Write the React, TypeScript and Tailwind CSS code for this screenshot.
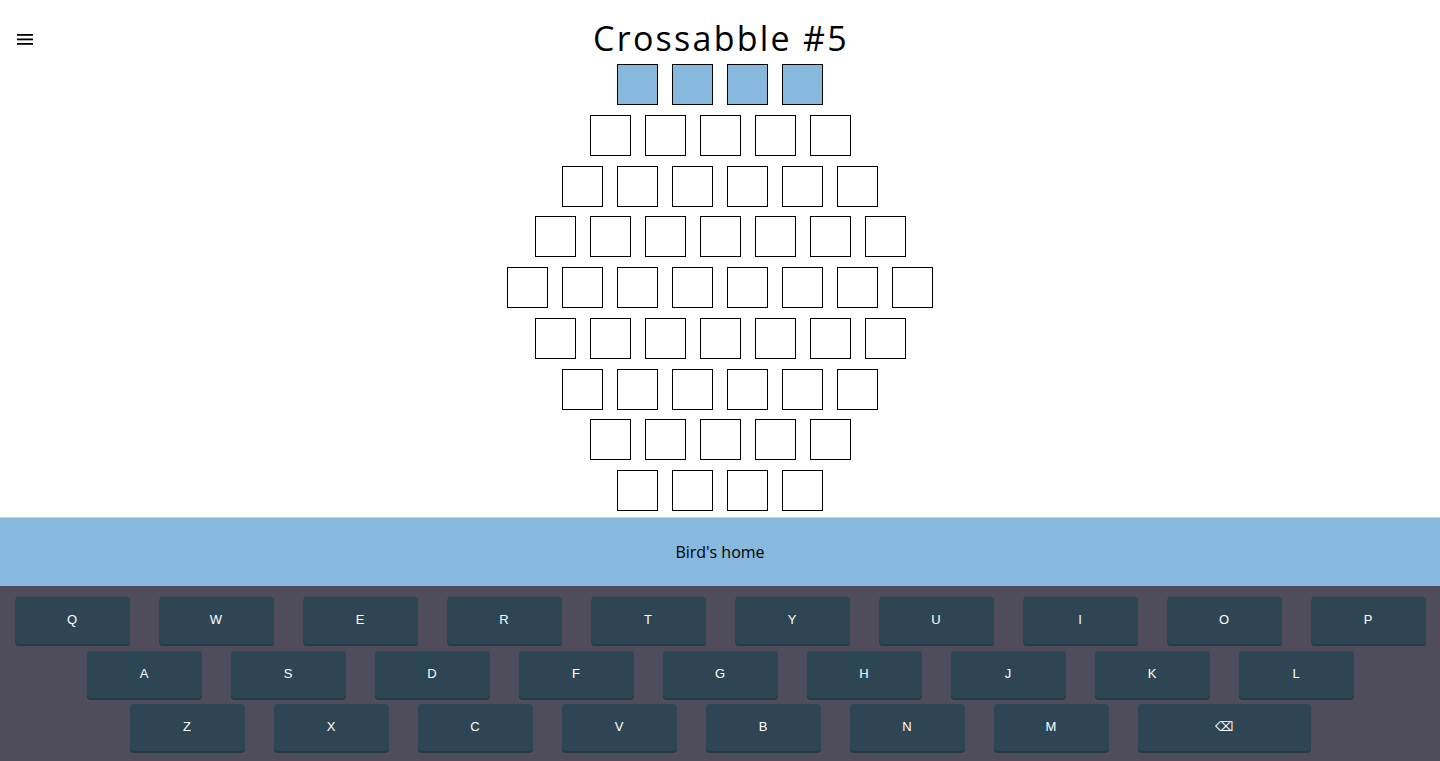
import React from 'react';

const rows = [4, 5, 6, 7, 8, 7, 6, 5, 4];
const keyRows = [
  ['Q', 'W', 'E', 'R', 'T', 'Y', 'U', 'I', 'O', 'P'],
  ['A', 'S', 'D', 'F', 'G', 'H', 'J', 'K', 'L'],
  ['Z', 'X', 'C', 'V', 'B', 'N', 'M', '⌫'],
];

function MenuIcon() {
  return (
    <svg width="16" height="12" viewBox="0 0 16 12" fill="#000">
      <rect x="0" y="0" width="16" height="1.8" />
      <rect x="0" y="4.5" width="16" height="1.8" />
      <rect x="0" y="9" width="16" height="1.8" />
    </svg>
  );
}

export default function App() {
  return (
    <div className="w-[1440px] h-[761px] bg-white flex flex-col overflow-hidden" style={{ fontFamily: '"Open Sans", "Noto Sans", sans-serif' }}>
      {/* header */}
      <div className="relative h-[64px] flex justify-center">
        <button className="absolute left-[17px] top-[34px]">
          <MenuIcon />
        </button>
        <h1 className="text-[34px] leading-none tracking-[2.25px] text-black mt-[21px] pl-[2px]">Crossabble #5</h1>
      </div>

      {/* board */}
      <div className="flex flex-col items-center gap-y-[9.75px]">
        {rows.map((n, r) => (
          <div key={r} className="flex gap-x-[14px]">
            {Array.from({ length: n }).map((_, i) => (
              <div
                key={i}
                className={
                  r === 0
                    ? 'w-[41px] h-[41px] border border-black bg-[#86b9dd]'
                    : 'w-[41px] h-[41px] border border-black bg-white'
                }
              />
            ))}
          </div>
        ))}
      </div>

      {/* clue */}
      <div className="mt-[6px] h-[69px] bg-[#86b9dd] border-t border-[#c8d6df] flex items-center justify-center text-[16px] text-black">
        Bird's home
      </div>

      {/* keyboard */}
      <div className="flex-1 bg-[#4f4d5c] pt-[11px] flex flex-col items-center gap-y-[6.5px]" style={{ fontFamily: '"Liberation Sans", Arial, sans-serif' }}>
        {keyRows.map((row, r) => (
          <div key={r} className="flex gap-x-[29px]">
            {row.map((k) => (
              <button
                key={k}
                className={
                  (k === '⌫' ? 'w-[173px] ' : 'w-[115px] ') +
                  'h-[47px] rounded-[4px] bg-[#2e4654] shadow-[0_2px_0_#253a47] text-white text-[13px] flex items-center justify-center pb-[1px]'
                }
              >
                {k}
              </button>
            ))}
          </div>
        ))}
      </div>
    </div>
  );
}
